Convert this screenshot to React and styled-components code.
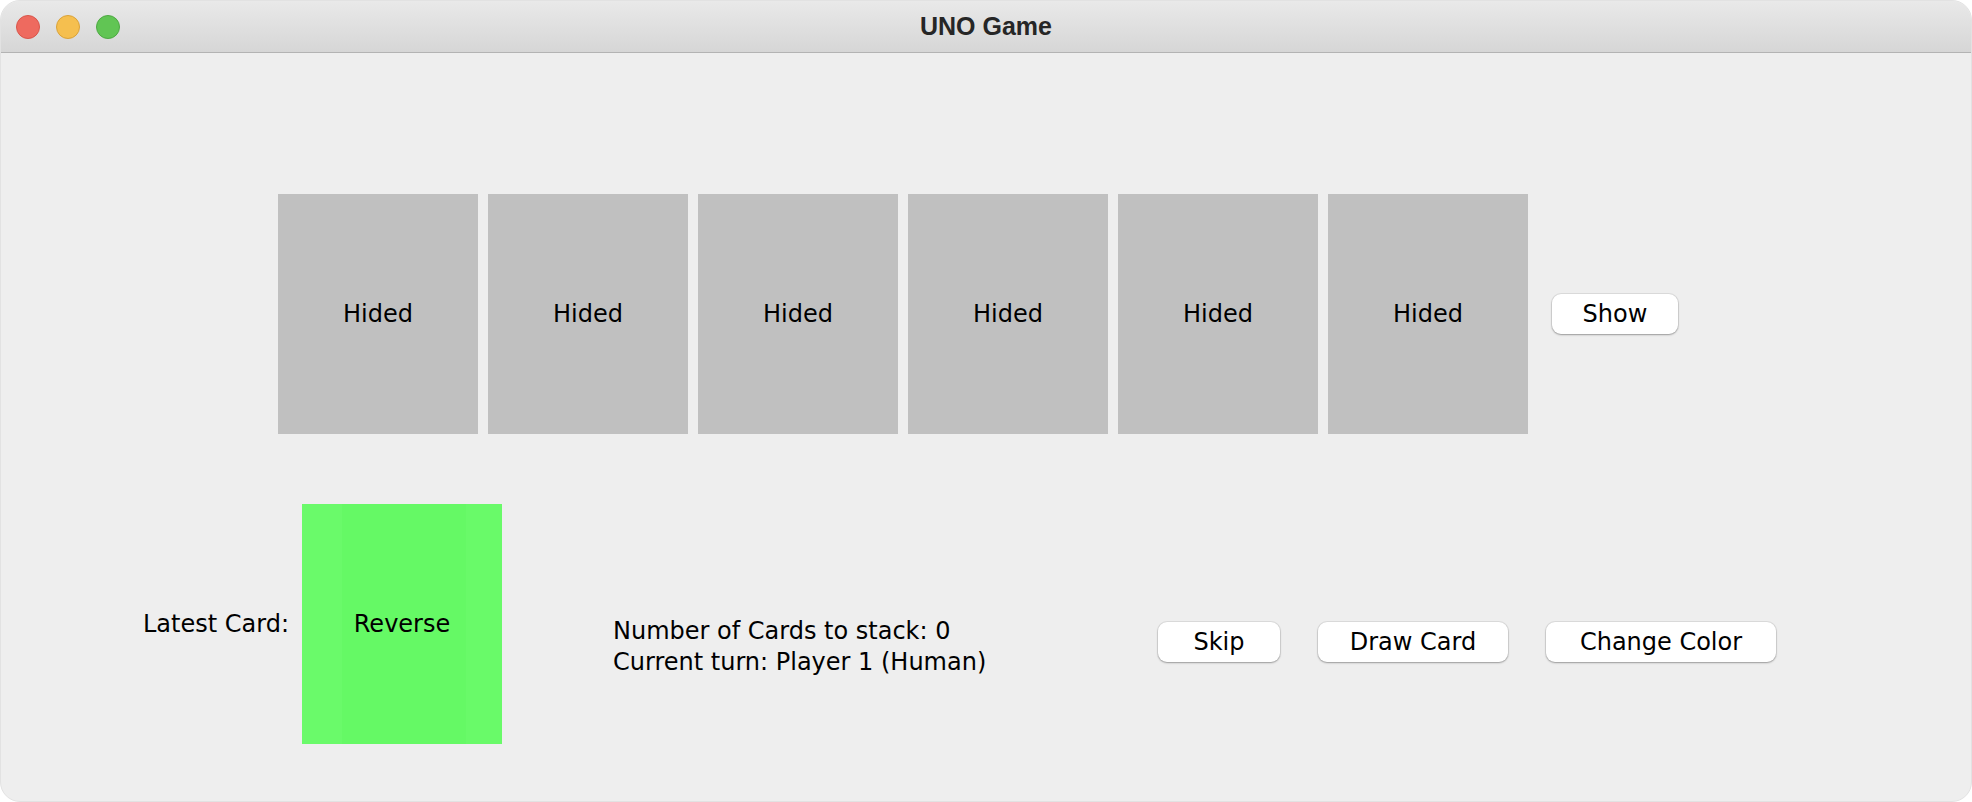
import React from 'react';
import styled, { createGlobalStyle } from 'styled-components';

const GlobalStyle = createGlobalStyle`
	html, body {
		margin: 0;
		padding: 0;
		background: #ffffff;
	}
	* {
		box-sizing: border-box;
	}
`;

const Window = styled.div`
	display: flex;
	flex-direction: column;
	width: 100vw;
	height: 100vh;
	border: 1px solid #e2e2e2;
	border-radius: 20px;
	overflow: hidden;
	background: #eeeeee;
	font-family: 'DejaVu Sans', 'Liberation Sans', sans-serif;
	color: #000;
`;

const TitleBar = styled.header`
	position: relative;
	display: flex;
	align-items: center;
	height: 52px;
	padding-left: 15px;
	gap: 16px;
	background: linear-gradient(#e9e9e9, #d6d6d6);
	border-bottom: 1px solid #b3b3b3;
	flex: none;
`;

const Light = styled.span`
	width: 24px;
	height: 24px;
	border-radius: 50%;
	background: ${(p) => p.color};
	border: 1px solid ${(p) => p.edge};
`;

const Title = styled.div`
	position: absolute;
	left: 0;
	right: 0;
	top: 0;
	bottom: 0;
	display: flex;
	align-items: center;
	justify-content: center;
	font-family: 'Liberation Sans', Arial, sans-serif;
	font-weight: bold;
	font-size: 25px;
	color: #262626;
	pointer-events: none;
`;

const Content = styled.main`
	flex: 1;
	display: flex;
	flex-direction: column;
	padding-top: 141px;
`;

const HandRow = styled.div`
	display: flex;
	align-items: center;
	gap: 10px;
	padding-left: 277px;
`;

const Card = styled.div`
	width: 200px;
	height: 240px;
	display: flex;
	align-items: center;
	justify-content: center;
	font-size: 24px;
	background: ${(p) =>
		p.green
			? 'linear-gradient(90deg, #6afa6a 0 40px, #65f965 40px 164px, #69fa69 164px)'
			: '#c0c0c0'};
	flex: none;
`;

const Button = styled.button`
	height: 40px;
	width: ${(p) => p.w}px;
	padding: 0;
	border: none;
	border-radius: 9px;
	background: #ffffff;
	box-shadow: 0 0 0 1px rgba(0, 0, 0, 0.07), 0 1px 2px rgba(0, 0, 0, 0.3);
	font-family: 'DejaVu Sans', sans-serif;
	font-size: 24px;
	color: #000;
	flex: none;
	cursor: pointer;
`;

const ShowButton = styled(Button)`
	margin-left: 14px;
`;

const TableRow = styled.div`
	display: flex;
	align-items: center;
	margin-top: 70px;
	padding-left: 142px;
`;

const Label = styled.div`
	width: 159px;
	font-size: 24px;
	flex: none;
`;

const Controls = styled.div`
	display: flex;
	align-items: center;
	padding-top: 36px;
	padding-left: 111px;
`;

const Info = styled.div`
	width: 545px;
	margin-top: 10px;
	font-size: 24px;
	line-height: 31px;
	flex: none;
`;

const ButtonGroup = styled.div`
	display: flex;
	gap: 38px;
`;

function App() {
	const hand = [1, 2, 3, 4, 5, 6];
	return (
		<>
			<GlobalStyle />
			<Window>
				<TitleBar>
					<Light color='#ee6a5f' edge='#d8564b' />
					<Light color='#f5bf4f' edge='#d9a23a' />
					<Light color='#61c554' edge='#4ea843' />
					<Title>UNO Game</Title>
				</TitleBar>
				<Content>
					<HandRow>
						{hand.map((n) => (
							<Card key={n}>Hided</Card>
						))}
						<ShowButton w={126}>Show</ShowButton>
					</HandRow>
					<TableRow>
						<Label>Latest Card:</Label>
						<Card green>Reverse</Card>
						<Controls>
							<Info>
								<div>Number of Cards to stack: 0</div>
								<div>Current turn: Player 1 (Human)</div>
							</Info>
							<ButtonGroup>
								<Button w={122}>Skip</Button>
								<Button w={190}>Draw Card</Button>
								<Button w={230}>Change Color</Button>
							</ButtonGroup>
						</Controls>
					</TableRow>
				</Content>
			</Window>
		</>
	);
}

export default App;
